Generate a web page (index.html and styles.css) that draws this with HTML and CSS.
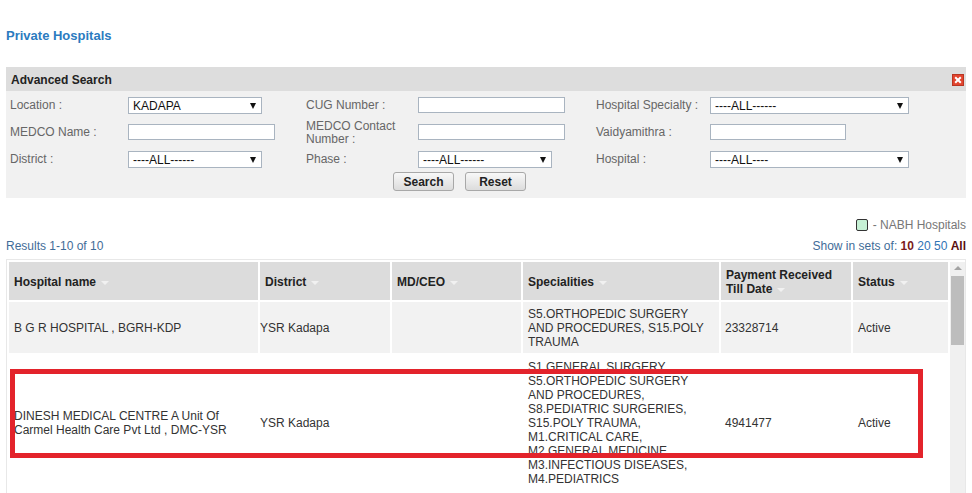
FILE: index.html
```html
<!DOCTYPE html>
<html lang="en">
<head>
  <meta charset="UTF-8">
  <meta name="viewport" content="width=device-width, initial-scale=1.0">
  <title>Private Hospitals</title>
  <link rel="stylesheet" href="styles.css">
</head>
<body>
  <h1 class="page-title">Private Hospitals</h1>

  <!-- search panel -->
  <div class="search-panel">
    <div class="panel-head">
      <span>Advanced Search</span>
      <a class="close-btn" href="javascript:;" title="Close">
        <svg width="12" height="12" viewBox="0 0 12 12">
          <rect x="0.5" y="0.5" width="11" height="11" fill="#e2452f" stroke="#b93522"/>
          <path d="M3.2 3.2 L8.8 8.8 M8.8 3.2 L3.2 8.8" stroke="#fff" stroke-width="2"/>
        </svg>
      </a>
    </div>

    <div class="search-grid">
      <label>Location :</label>
      <div class="select w-sm"><select><option>KADAPA</option></select></div>
      <label>CUG Number :</label>
      <div><input class="w-md" type="text"></div>
      <label>Hospital Specialty :</label>
      <div class="select w-lg"><select><option>----ALL------</option></select></div>

      <label>MEDCO Name :</label>
      <div><input class="w-md" type="text"></div>
      <label>MEDCO Contact Number :</label>
      <div><input class="w-md" type="text"></div>
      <label>Vaidyamithra :</label>
      <div><input class="w-vm" type="text"></div>

      <label>District :</label>
      <div class="select w-sm"><select><option>----ALL------</option></select></div>
      <label>Phase :</label>
      <div class="select w-sm"><select><option>----ALL------</option></select></div>
      <label>Hospital :</label>
      <div class="select w-lg"><select><option>----ALL----</option></select></div>
    </div>

    <div class="search-btns">
      <button type="button">Search</button>
      <button type="button">Reset</button>
    </div>
  </div>

  <div class="legend">
    <span class="nabh-box"></span>
    <span>- NABH Hospitals</span>
  </div>

  <div class="results-bar">
    <span>Results 1-10 of 10</span>
    <span>Show in sets of: <b class="cur">10</b> <a href="javascript:;">20</a> <a href="javascript:;">50</a> <b class="all">All</b></span>
  </div>

  <!-- results table -->
  <div class="table-wrap">
    <table class="hosp-table">
      <thead>
        <tr>
          <th class="c-name"><span class="sort">Hospital name</span></th>
          <th class="c-dist"><span class="sort">District</span></th>
          <th class="c-ceo"><span class="sort">MD/CEO</span></th>
          <th class="c-spec"><span class="sort">Specialities</span></th>
          <th class="c-pay">Payment Received<br><span class="sort">Till Date</span></th>
          <th class="c-status"><span class="sort">Status</span></th>
        </tr>
      </thead>
      <tbody>
        <tr class="odd">
          <td>B G R HOSPITAL , BGRH-KDP</td>
          <td class="dist">YSR Kadapa</td>
          <td></td>
          <td>S5.ORTHOPEDIC SURGERY AND PROCEDURES, S15.POLY TRAUMA</td>
          <td class="pay">23328714</td>
          <td>Active</td>
        </tr>
        <tr>
          <td>DINESH MEDICAL CENTRE A Unit Of Carmel Health Care Pvt Ltd , DMC-YSR</td>
          <td class="dist">YSR Kadapa</td>
          <td></td>
          <td>S1.GENERAL SURGERY, S5.ORTHOPEDIC SURGERY AND PROCEDURES, S8.PEDIATRIC SURGERIES, S15.POLY TRAUMA, M1.CRITICAL CARE, M2.GENERAL MEDICINE, M3.INFECTIOUS DISEASES, M4.PEDIATRICS</td>
          <td class="pay">4941477</td>
          <td>Active</td>
        </tr>
      </tbody>
    </table>

    <div class="scroll-track">
      <span class="scroll-up"></span>
      <span class="scroll-thumb"></span>
    </div>

    <!-- highlight mark -->
    <div class="mark-box"></div>
  </div>
</body>
</html>
```

FILE: styles.css
```css
* {
  box-sizing: border-box;
}
html, body {
  margin: 0;
  padding: 0;
}
body {
  font-family: "Liberation Sans", Arial, sans-serif;
  font-size: 12px;
  color: #333;
  background: #fff;
  overflow: hidden;
}
.page-title {
  margin: 28px 6px 0;
  font-size: 13px;
  line-height: 16px;
  font-weight: bold;
  color: #2b7bbf;
}

/* search panel */
.search-panel {
  margin: 23px 6px 0;
  background: #f1f1f1;
  padding-bottom: 7px;
}
.panel-head {
  display: flex;
  align-items: center;
  justify-content: space-between;
  height: 24px;
  padding: 1px 2px 0 5px;
  background: #dddddd;
  font-weight: bold;
  color: #222;
}
.close-btn {
  display: block;
  width: 12px;
  height: 12px;
  line-height: 0;
}
.search-grid {
  display: grid;
  grid-template-columns: 118px 178px 112px 178px 114px 1fr;
  grid-auto-rows: 18px;
  row-gap: 9px;
  align-items: center;
  padding: 5px 0 0 4px;
}
.search-grid label {
  color: #666;
  line-height: 13px;
  padding-top: 1px;
}
.search-grid input {
  display: block;
  height: 16px;
  border: 1px solid #a9b4c0;
  background: #fff;
  padding: 0 4px;
  font: inherit;
}
.select {
  position: relative;
  height: 17px;
}
.select select {
  appearance: none;
  -webkit-appearance: none;
  display: block;
  width: 100%;
  height: 17px;
  border: 1px solid #a9b4c0;
  border-radius: 0;
  background: #fff;
  padding: 1px 0 0 4px;
  font: inherit;
  color: #111;
}
.select::after {
  content: "";
  position: absolute;
  right: 6px;
  top: 6px;
  border-left: 3px solid transparent;
  border-right: 3px solid transparent;
  border-top: 6px solid #111;
  pointer-events: none;
}
.w-sm { width: 134px; }
.w-md { width: 147px; }
.w-lg { width: 199px; }
.w-vm { width: 136px; }

.search-btns {
  display: flex;
  gap: 11px;
  margin-top: 4px;
  padding-left: 387px;
}
.search-btns button {
  width: 61px;
  height: 19px;
  padding: 1px 0 0;
  border: 1px solid #a8a8a8;
  border-radius: 3px;
  background: linear-gradient(#f8f8f8, #dcdcdc);
  font: bold 12px "Liberation Sans", Arial, sans-serif;
  color: #222;
}

/* legend + paging */
.legend {
  display: flex;
  justify-content: flex-end;
  align-items: center;
  gap: 5px;
  margin: 20px 6px 0;
  height: 14px;
  color: #777;
}
.nabh-box {
  width: 12px;
  height: 12px;
  border: 1px solid #333;
  border-radius: 2px;
  background: #c6f1d5;
}
.results-bar {
  display: flex;
  justify-content: space-between;
  margin: 7px 6px 0;
  line-height: 14px;
  color: #3f6c98;
}
.results-bar a {
  color: #2f73b5;
  text-decoration: none;
}
.results-bar .cur {
  color: #7b1c1c;
}
.results-bar .all {
  color: #5a0f0f;
}

/* table */
.table-wrap {
  position: relative;
  display: flex;
  align-items: flex-start;
  margin: 6px 6px 0;
  border: 1px solid #e8e8e8;
}
.hosp-table {
  width: 943px;
  table-layout: fixed;
  border-collapse: separate;
  border-spacing: 2px;
}
.hosp-table th {
  height: 38px;
  padding: 6px 5px 4px;
  background: #dcdcdc;
  text-align: left;
  font-weight: bold;
  line-height: 14px;
  color: #222;
  vertical-align: middle;
}
.hosp-table td {
  padding: 5px 5px 4px;
  line-height: 14px;
  vertical-align: middle;
  color: #333;
}
.hosp-table tr.odd td {
  background: #f2f2f2;
}
.hosp-table td.dist {
  padding-left: 0;
}
.hosp-table td.pay {
  padding-left: 4px;
}
.c-name { width: 249px; }
.c-dist { width: 130px; }
.c-ceo { width: 129px; }
.c-spec { width: 196px; }
.c-pay { width: 130px; }
.c-status { width: 95px; }
.sort::after {
  content: "";
  display: inline-block;
  margin-left: 5px;
  vertical-align: middle;
  border-left: 4px solid transparent;
  border-right: 4px solid transparent;
  border-top: 4px solid #f1f1f1;
}

.scroll-track {
  width: 16px;
  height: 260px;
  margin-top: 2px;
  background: #f0f0f0;
  padding-top: 4px;
}
.scroll-up {
  display: block;
  width: 0;
  margin: 0 auto;
  border-left: 4px solid transparent;
  border-right: 4px solid transparent;
  border-bottom: 4px solid #a3a3a3;
}
.scroll-thumb {
  display: block;
  width: 13px;
  height: 69px;
  margin: 6px 0 0 1px;
  background: #bdbdbd;
}

.mark-box {
  position: absolute;
  left: 3px;
  top: 109px;
  width: 913px;
  height: 89px;
  border: 5px solid #e3232b;
  pointer-events: none;
}
```
